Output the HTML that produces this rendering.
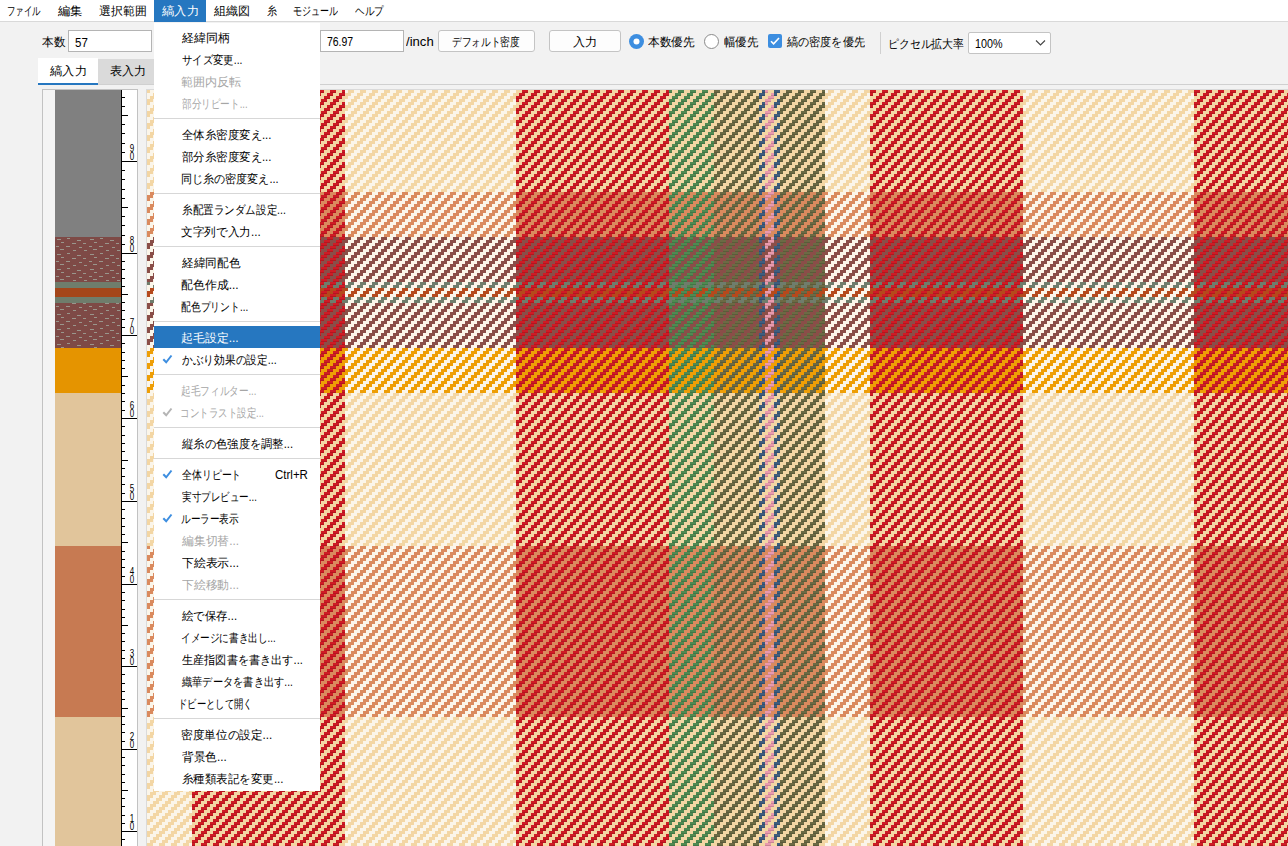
<!DOCTYPE html>
<html><head><meta charset="utf-8">
<style>
*{margin:0;padding:0;box-sizing:border-box}
html,body{width:1288px;height:846px;overflow:hidden;background:#f2f2f2;font-family:"Liberation Sans",sans-serif;font-size:12px;color:#000;position:relative}
.abs{position:absolute}
.t{position:absolute;white-space:nowrap;line-height:14px;transform-origin:0 0}
.zm{z-index:5}
#mb{position:absolute;left:0;top:0;width:1288px;height:22px;background:#fff;border-bottom:1px solid #d9d9d9}
.inp{position:absolute;background:#fff;border:1px solid #b4b4b4}
.btn{position:absolute;background:#fdfdfd;border:1px solid #c4c4c4;border-radius:3px}
.rl{position:absolute;left:128px;width:8px;font-family:"Liberation Sans",sans-serif;font-size:10px;line-height:8px;text-align:center;color:#000;transform:scaleX(.8)}
#dd{position:absolute;left:154px;top:23px;width:166px;height:768px;background:#fff;z-index:4}
.hl{position:absolute;left:154px;width:166px;height:22px;background:#2677c0;z-index:4}
.sep{position:absolute;left:154px;width:166px;height:1px;background:#d7d7d7;z-index:4}
.dz{z-index:4}
</style></head><body>
<svg class="abs" style="left:0;top:0" width="1288" height="846" shape-rendering="crispEdges">
<defs><pattern id="pB" width="12" height="12" patternUnits="userSpaceOnUse"><path d="M0 0h6v3H0zM0 3h3v3H0zM9 3h3v3H9zM6 6h6v3H6zM3 9h6v3H3z" fill="#3f5d7e"/><path d="M0 2h6v1H0zM0 5h3v1H0zM9 5h3v1H9zM6 8h6v1H6zM3 11h6v1H3z" fill="#364f6c"/></pattern><pattern id="pG" width="12" height="12" patternUnits="userSpaceOnUse"><path d="M0 0h6v3H0zM0 3h3v3H0zM9 3h3v3H9zM6 6h6v3H6zM3 9h6v3H3z" fill="#4f8a52"/><path d="M0 2h6v1H0zM0 5h3v1H0zM9 5h3v1H9zM6 8h6v1H6zM3 11h6v1H3z" fill="#437646"/></pattern><pattern id="pO" width="12" height="12" patternUnits="userSpaceOnUse"><path d="M0 0h6v3H0zM0 3h3v3H0zM9 3h3v3H9zM6 6h6v3H6zM3 9h6v3H3z" fill="#6c6a44"/><path d="M0 2h6v1H0zM0 5h3v1H0zM9 5h3v1H9zM6 8h6v1H6zM3 11h6v1H3z" fill="#5c5b3a"/></pattern><pattern id="pP" width="12" height="12" patternUnits="userSpaceOnUse"><path d="M0 0h6v3H0zM0 3h3v3H0zM9 3h3v3H9zM6 6h6v3H6zM3 9h6v3H3z" fill="#e99aae"/><path d="M0 2h6v1H0zM0 5h3v1H0zM9 5h3v1H9zM6 8h6v1H6zM3 11h6v1H3z" fill="#c88495"/></pattern><pattern id="pR" width="12" height="12" patternUnits="userSpaceOnUse"><path d="M0 0h6v3H0zM0 3h3v3H0zM9 3h3v3H9zM6 6h6v3H6zM3 9h6v3H3z" fill="#cf1b25"/><path d="M0 2h6v1H0zM0 5h3v1H0zM9 5h3v1H9zM6 8h6v1H6zM3 11h6v1H3z" fill="#b2171f"/></pattern><pattern id="pW" width="12" height="12" patternUnits="userSpaceOnUse"><path d="M0 0h6v3H0zM0 3h3v3H0zM9 3h3v3H9zM6 6h6v3H6zM3 9h6v3H3z" fill="#fbf5e9"/><path d="M0 2h6v1H0zM0 5h3v1H0zM9 5h3v1H9zM6 8h6v1H6zM3 11h6v1H3z" fill="#fbf5e9"/></pattern><pattern id="dsh" width="33" height="15" patternUnits="userSpaceOnUse" x="55" y="237"><path d="M2 2h4v1H2zM12 1h3v1h-3zM22 3h4v1h-4zM6 5h3v1H6zM17 6h4v1h-4zM28 6h3v1h-3zM1 9h3v1H1zM11 9h4v1h-4zM24 10h3v1h-3zM5 12h4v1H5zM18 13h3v1h-3zM29 13h3v1h-3z" fill="#9a968c"/></pattern></defs>
<rect x="42" y="89" width="96" height="757" fill="#c2c2c2"/>
<rect x="43" y="90" width="94" height="756" fill="#f4f4f4"/>
<rect x="55" y="90" width="66" height="147" fill="#808080"/><rect x="55" y="237" width="66" height="45" fill="#7e4a46"/><rect x="55" y="282" width="66" height="6" fill="#6f7d6c"/><rect x="55" y="288" width="66" height="9" fill="#a4461a"/><rect x="55" y="297" width="66" height="6" fill="#6f7d6c"/><rect x="55" y="303" width="66" height="45" fill="#7e4a46"/><rect x="55" y="348" width="66" height="45" fill="#e59400"/><rect x="55" y="393" width="66" height="153" fill="#e1c59b"/><rect x="55" y="546" width="66" height="171" fill="#c77a52"/><rect x="55" y="717" width="66" height="129" fill="#e1c59b"/><rect x="55" y="237" width="66" height="45" fill="url(#dsh)"/><rect x="55" y="303" width="66" height="45" fill="url(#dsh)"/>
<rect x="122" y="90" width="15" height="756" fill="#fff"/><rect x="121" y="90" width="1" height="756" fill="#000"/><rect x="121" y="97" width="4" height="1" fill="#000"/><rect x="121" y="106" width="4" height="1" fill="#000"/><rect x="121" y="115" width="7" height="1" fill="#000"/><rect x="121" y="124" width="4" height="1" fill="#000"/><rect x="121" y="133" width="4" height="1" fill="#000"/><rect x="121" y="143" width="4" height="1" fill="#000"/><rect x="121" y="152" width="4" height="1" fill="#000"/><rect x="121" y="170" width="4" height="1" fill="#000"/><rect x="121" y="179" width="4" height="1" fill="#000"/><rect x="121" y="189" width="4" height="1" fill="#000"/><rect x="121" y="198" width="4" height="1" fill="#000"/><rect x="121" y="207" width="7" height="1" fill="#000"/><rect x="121" y="216" width="4" height="1" fill="#000"/><rect x="121" y="225" width="4" height="1" fill="#000"/><rect x="121" y="235" width="4" height="1" fill="#000"/><rect x="121" y="244" width="4" height="1" fill="#000"/><rect x="121" y="261" width="4" height="1" fill="#000"/><rect x="121" y="269" width="4" height="1" fill="#000"/><rect x="121" y="278" width="4" height="1" fill="#000"/><rect x="121" y="286" width="4" height="1" fill="#000"/><rect x="121" y="294" width="7" height="1" fill="#000"/><rect x="121" y="302" width="4" height="1" fill="#000"/><rect x="121" y="310" width="4" height="1" fill="#000"/><rect x="121" y="319" width="4" height="1" fill="#000"/><rect x="121" y="327" width="4" height="1" fill="#000"/><rect x="121" y="343" width="4" height="1" fill="#000"/><rect x="121" y="352" width="4" height="1" fill="#000"/><rect x="121" y="360" width="4" height="1" fill="#000"/><rect x="121" y="368" width="4" height="1" fill="#000"/><rect x="121" y="376" width="7" height="1" fill="#000"/><rect x="121" y="385" width="4" height="1" fill="#000"/><rect x="121" y="393" width="4" height="1" fill="#000"/><rect x="121" y="401" width="4" height="1" fill="#000"/><rect x="121" y="410" width="4" height="1" fill="#000"/><rect x="121" y="426" width="4" height="1" fill="#000"/><rect x="121" y="435" width="4" height="1" fill="#000"/><rect x="121" y="443" width="4" height="1" fill="#000"/><rect x="121" y="451" width="4" height="1" fill="#000"/><rect x="121" y="460" width="7" height="1" fill="#000"/><rect x="121" y="468" width="4" height="1" fill="#000"/><rect x="121" y="476" width="4" height="1" fill="#000"/><rect x="121" y="484" width="4" height="1" fill="#000"/><rect x="121" y="493" width="4" height="1" fill="#000"/><rect x="121" y="509" width="4" height="1" fill="#000"/><rect x="121" y="518" width="4" height="1" fill="#000"/><rect x="121" y="526" width="4" height="1" fill="#000"/><rect x="121" y="534" width="4" height="1" fill="#000"/><rect x="121" y="542" width="7" height="1" fill="#000"/><rect x="121" y="551" width="4" height="1" fill="#000"/><rect x="121" y="559" width="4" height="1" fill="#000"/><rect x="121" y="567" width="4" height="1" fill="#000"/><rect x="121" y="576" width="4" height="1" fill="#000"/><rect x="121" y="592" width="4" height="1" fill="#000"/><rect x="121" y="600" width="4" height="1" fill="#000"/><rect x="121" y="609" width="4" height="1" fill="#000"/><rect x="121" y="617" width="4" height="1" fill="#000"/><rect x="121" y="625" width="7" height="1" fill="#000"/><rect x="121" y="633" width="4" height="1" fill="#000"/><rect x="121" y="641" width="4" height="1" fill="#000"/><rect x="121" y="650" width="4" height="1" fill="#000"/><rect x="121" y="658" width="4" height="1" fill="#000"/><rect x="121" y="674" width="4" height="1" fill="#000"/><rect x="121" y="683" width="4" height="1" fill="#000"/><rect x="121" y="691" width="4" height="1" fill="#000"/><rect x="121" y="699" width="4" height="1" fill="#000"/><rect x="121" y="708" width="7" height="1" fill="#000"/><rect x="121" y="716" width="4" height="1" fill="#000"/><rect x="121" y="724" width="4" height="1" fill="#000"/><rect x="121" y="732" width="4" height="1" fill="#000"/><rect x="121" y="741" width="4" height="1" fill="#000"/><rect x="121" y="757" width="4" height="1" fill="#000"/><rect x="121" y="765" width="4" height="1" fill="#000"/><rect x="121" y="774" width="4" height="1" fill="#000"/><rect x="121" y="782" width="4" height="1" fill="#000"/><rect x="121" y="790" width="7" height="1" fill="#000"/><rect x="121" y="798" width="4" height="1" fill="#000"/><rect x="121" y="806" width="4" height="1" fill="#000"/><rect x="121" y="815" width="4" height="1" fill="#000"/><rect x="121" y="823" width="4" height="1" fill="#000"/><rect x="121" y="839" width="4" height="1" fill="#000"/><rect x="121" y="161" width="16" height="1" fill="#000"/><rect x="121" y="253" width="16" height="1" fill="#000"/><rect x="121" y="335" width="16" height="1" fill="#000"/><rect x="121" y="418" width="16" height="1" fill="#000"/><rect x="121" y="501" width="16" height="1" fill="#000"/><rect x="121" y="584" width="16" height="1" fill="#000"/><rect x="121" y="666" width="16" height="1" fill="#000"/><rect x="121" y="749" width="16" height="1" fill="#000"/><rect x="121" y="831" width="16" height="1" fill="#000"/>
<rect x="146" y="89" width="1142" height="757" fill="#dadada"/>
<rect x="147" y="90" width="1141" height="102" fill="#f3d6a4"/><rect x="147" y="192" width="1141" height="45" fill="#da8a5e"/><rect x="147" y="237" width="1141" height="45" fill="#8a4e48"/><rect x="147" y="282" width="1141" height="6" fill="#6f7d6c"/><rect x="147" y="288" width="1141" height="9" fill="#b5491c"/><rect x="147" y="297" width="1141" height="6" fill="#6f7d6c"/><rect x="147" y="303" width="1141" height="45" fill="#8a4e48"/><rect x="147" y="348" width="1141" height="45" fill="#ee9e06"/><rect x="147" y="393" width="1141" height="153" fill="#f3d6a4"/><rect x="147" y="546" width="1141" height="171" fill="#da8a5e"/><rect x="147" y="717" width="1141" height="129" fill="#f3d6a4"/><rect x="147" y="90" width="45" height="756" fill="url(#pW)"/><rect x="192" y="90" width="153" height="756" fill="url(#pR)"/><rect x="345" y="90" width="171" height="756" fill="url(#pW)"/><rect x="516" y="90" width="153" height="756" fill="url(#pR)"/><rect x="669" y="90" width="45" height="756" fill="url(#pG)"/><rect x="714" y="90" width="45" height="756" fill="url(#pO)"/><rect x="759" y="90" width="6" height="756" fill="url(#pB)"/><rect x="765" y="90" width="9" height="756" fill="url(#pP)"/><rect x="774" y="90" width="6" height="756" fill="url(#pB)"/><rect x="780" y="90" width="45" height="756" fill="url(#pO)"/><rect x="825" y="90" width="45" height="756" fill="url(#pW)"/><rect x="870" y="90" width="153" height="756" fill="url(#pR)"/><rect x="1023" y="90" width="171" height="756" fill="url(#pW)"/><rect x="1194" y="90" width="94" height="756" fill="url(#pR)"/>
</svg>
<div class="rl" style="top:145px">9<br>0</div><div class="rl" style="top:237px">8<br>0</div><div class="rl" style="top:319px">7<br>0</div><div class="rl" style="top:402px">6<br>0</div><div class="rl" style="top:485px">5<br>0</div><div class="rl" style="top:568px">4<br>0</div><div class="rl" style="top:650px">3<br>0</div><div class="rl" style="top:733px">2<br>0</div><div class="rl" style="top:815px">1<br>0</div>
<div id="mb"></div>
<div class="abs" style="left:154px;top:0;width:52px;height:22px;background:#2677c0"></div>
<div class="inp" style="left:68px;top:30px;width:84px;height:22px"></div>
<div class="inp" style="left:320px;top:30px;width:84px;height:22px"></div>
<div class="btn" style="left:438px;top:30px;width:97px;height:22px"></div>
<div class="btn" style="left:549px;top:30px;width:72px;height:22px"></div>
<svg class="abs" style="left:629px;top:34px;z-index:1" width="15" height="15"><circle cx="7.5" cy="7.5" r="7.5" fill="#3d8ee0"/><circle cx="7.5" cy="7.5" r="3" fill="#fff"/></svg>
<svg class="abs" style="left:704px;top:34px;z-index:1" width="15" height="15"><circle cx="7.5" cy="7.5" r="7" fill="#fff" stroke="#8a8a8a" stroke-width="1"/></svg>
<svg class="abs" style="left:768px;top:34px;z-index:1" width="14" height="14"><rect x="0" y="0" width="14" height="14" rx="2" fill="#3d8ee0"/><path d="M3 7.2l2.6 2.6L11 4" fill="none" stroke="#fff" stroke-width="1.6"/></svg>
<div class="abs" style="left:880px;top:32px;width:1px;height:22px;background:#d0d0d0"></div>
<div class="inp" style="left:968px;top:32px;width:83px;height:22px;border-color:#c4c4c4;border-radius:2px"></div>
<svg class="abs" style="left:1035px;top:39px;z-index:1" width="11" height="8"><path d="M1 1.5l4.5 4.5L10 1.5" fill="none" stroke="#444" stroke-width="1.1"/></svg>
<div class="abs" style="left:38px;top:84px;width:1250px;height:1px;background:#d0d0d0"></div>
<div class="abs" style="left:38px;top:58px;width:60px;height:27px;background:#fff"></div>
<div class="abs" style="left:38px;top:83px;width:60px;height:2px;background:#2677c0"></div>
<div class="abs" style="left:98px;top:59px;width:56px;height:25px;background:#dadada"></div>
<div id="dd"></div>
<div class="sep" style="top:118px"></div><div class="sep" style="top:193px"></div><div class="sep" style="top:246px"></div><div class="sep" style="top:321px"></div><div class="hl" style="top:326px"></div><svg class="abs dz" style="left:162px;top:354px" width="11" height="10" viewBox="0 0 11 10"><path d="M1.3 5.2l2.9 3.1 5.3-6.8" fill="none" stroke="#3d8ee0" stroke-width="2"/></svg><div class="sep" style="top:374px"></div><svg class="abs dz" style="left:162px;top:407px" width="11" height="10" viewBox="0 0 11 10"><path d="M1.3 5.2l2.9 3.1 5.3-6.8" fill="none" stroke="#b4b4b4" stroke-width="2"/></svg><div class="sep" style="top:427px"></div><div class="sep" style="top:458px"></div><svg class="abs dz" style="left:162px;top:469px" width="11" height="10" viewBox="0 0 11 10"><path d="M1.3 5.2l2.9 3.1 5.3-6.8" fill="none" stroke="#3d8ee0" stroke-width="2"/></svg><svg class="abs dz" style="left:162px;top:513px" width="11" height="10" viewBox="0 0 11 10"><path d="M1.3 5.2l2.9 3.1 5.3-6.8" fill="none" stroke="#3d8ee0" stroke-width="2"/></svg><div class="sep" style="top:599px"></div><div class="sep" style="top:718px"></div>
<div class="t" id="t0" style="left:7.30px;top:4.40px;color:#000;transform:scaleX(0.7021)">ファイル</div><div class="t" id="t1" style="left:58.00px;top:4.40px;color:#000;transform:scaleX(1.0217)">編集</div><div class="t" id="t2" style="left:98.60px;top:4.40px;color:#000;transform:scaleX(0.9915)">選択範囲</div><div class="t" id="t3" style="left:162.30px;top:4.40px;color:#fff;transform:scaleX(1.0265)">縞入力</div><div class="t" id="t4" style="left:214.30px;top:4.40px;color:#000;transform:scaleX(1.0029)">組織図</div><div class="t" id="t5" style="left:267.00px;top:4.40px;color:#000;transform:scaleX(0.8333)">糸</div><div class="t" id="t6" style="left:293.25px;top:4.40px;color:#000;transform:scaleX(0.7492)">モジュール</div><div class="t" id="t7" style="left:355.30px;top:4.40px;color:#000;transform:scaleX(0.7971)">ヘルプ</div><div class="t" id="t8" style="left:42.00px;top:35.00px;color:#000;transform:scaleX(0.9708)">本数</div><div class="t" id="t9" style="left:74.54px;top:35.50px;color:#000;transform:scaleX(0.9583)">57</div><div class="t" id="t10" style="left:327.40px;top:35.40px;color:#000;transform:scaleX(0.8700)">76.97</div><div class="t" id="t11" style="left:405.70px;top:34.50px;color:#000;transform:scaleX(1.0920)">/inch</div><div class="t" id="t12" style="left:452.20px;top:34.80px;color:#000;transform:scaleX(0.8036)">デフォルト密度</div><div class="t" id="t13" style="left:573.28px;top:34.80px;color:#000;transform:scaleX(1.0190)">入力</div><div class="t" id="t14" style="left:648.30px;top:34.80px;color:#000;transform:scaleX(0.9729)">本数優先</div><div class="t" id="t15" style="left:724.00px;top:34.80px;color:#000;transform:scaleX(0.9528)">幅優先</div><div class="t" id="t16" style="left:786.50px;top:34.80px;color:#000;transform:scaleX(0.9250)">縞の密度を優先</div><div class="t" id="t17" style="left:888.39px;top:36.60px;color:#000;transform:scaleX(0.9049)">ピクセル拡大率</div><div class="t" id="t18" style="left:974.90px;top:37.00px;color:#000;transform:scaleX(0.8967)">100%</div><div class="t" id="t19" style="left:50.20px;top:64.30px;color:#000;transform:scaleX(1.0235)">縞入力</div><div class="t" id="t20" style="left:110.30px;top:64.30px;color:#000;transform:scaleX(1.0088)">表入力</div><div class="t zm" id="t21" style="left:181.60px;top:31.40px;color:#000;transform:scaleX(0.9979)">経緯同柄</div><div class="t zm" id="t22" style="left:181.60px;top:53.40px;color:#000;transform:scaleX(0.8638)">サイズ変更...</div><div class="t zm" id="t23" style="left:180.59px;top:75.40px;color:#a6a6a6;transform:scaleX(1.0102)">範囲内反転</div><div class="t zm" id="t24" style="left:181.60px;top:97.40px;color:#a6a6a6;transform:scaleX(0.8012)">部分リピート...</div><div class="t zm" id="t25" style="left:181.60px;top:128.40px;color:#000;transform:scaleX(0.9516)">全体糸密度変え...</div><div class="t zm" id="t26" style="left:181.60px;top:150.40px;color:#000;transform:scaleX(0.9516)">部分糸密度変え...</div><div class="t zm" id="t27" style="left:180.68px;top:172.40px;color:#000;transform:scaleX(0.9212)">同じ糸の密度変え...</div><div class="t zm" id="t28" style="left:181.60px;top:203.40px;color:#000;transform:scaleX(0.8803)">糸配置ランダム設定...</div><div class="t zm" id="t29" style="left:180.63px;top:225.40px;color:#000;transform:scaleX(0.9725)">文字列で入力...</div><div class="t zm" id="t30" style="left:181.60px;top:256.40px;color:#000;transform:scaleX(0.9700)">経緯同配色</div><div class="t zm" id="t31" style="left:180.61px;top:278.40px;color:#000;transform:scaleX(0.9929)">配色作成...</div><div class="t zm" id="t32" style="left:180.78px;top:300.40px;color:#000;transform:scaleX(0.8187)">配色プリント...</div><div class="t zm" id="t33" style="left:180.61px;top:331.40px;color:#fff;transform:scaleX(0.9929)">起毛設定...</div><div class="t zm" id="t34" style="left:181.60px;top:353.40px;color:#000;transform:scaleX(0.8943)">かぶり効果の設定...</div><div class="t zm" id="t35" style="left:180.80px;top:384.40px;color:#a6a6a6;transform:scaleX(0.8022)">起毛フィルター...</div><div class="t zm" id="t36" style="left:180.02px;top:406.40px;color:#a6a6a6;transform:scaleX(0.7922)">コントラスト設定...</div><div class="t zm" id="t37" style="left:181.60px;top:437.40px;color:#000;transform:scaleX(0.9419)">縦糸の色強度を調整...</div><div class="t zm" id="t38" style="left:181.60px;top:468.40px;color:#000;transform:scaleX(0.8246)">全体リピート</div><div class="t zm" id="t39" style="left:275.40px;top:468.00px;color:#000;transform:scaleX(0.9588)">Ctrl+R</div><div class="t zm" id="t40" style="left:181.60px;top:490.40px;color:#000;transform:scaleX(0.7957)">実寸プレビュー...</div><div class="t zm" id="t41" style="left:180.80px;top:512.40px;color:#000;transform:scaleX(0.8014)">ルーラー表示</div><div class="t zm" id="t42" style="left:181.60px;top:534.40px;color:#a6a6a6;transform:scaleX(0.9842)">編集切替...</div><div class="t zm" id="t43" style="left:181.60px;top:556.40px;color:#000;transform:scaleX(0.9842)">下絵表示...</div><div class="t zm" id="t44" style="left:181.60px;top:578.40px;color:#a6a6a6;transform:scaleX(0.9842)">下絵移動...</div><div class="t zm" id="t45" style="left:181.60px;top:609.40px;color:#000;transform:scaleX(0.9491)">絵で保存...</div><div class="t zm" id="t46" style="left:180.80px;top:631.40px;color:#000;transform:scaleX(0.8017)">イメージに書き出し...</div><div class="t zm" id="t47" style="left:181.60px;top:653.40px;color:#000;transform:scaleX(0.9295)">生産指図書を書き出す...</div><div class="t zm" id="t48" style="left:181.60px;top:675.40px;color:#000;transform:scaleX(0.8527)">織華データを書き出す...</div><div class="t zm" id="t49" style="left:178.48px;top:697.40px;color:#000;transform:scaleX(0.7795)">ドビーとして開く</div><div class="t zm" id="t50" style="left:180.63px;top:728.40px;color:#000;transform:scaleX(0.9717)">密度単位の設定...</div><div class="t zm" id="t51" style="left:181.60px;top:750.40px;color:#000;transform:scaleX(0.9711)">背景色...</div><div class="t zm" id="t52" style="left:181.60px;top:772.40px;color:#000;transform:scaleX(0.9571)">糸種類表記を変更...</div>
</body></html>
